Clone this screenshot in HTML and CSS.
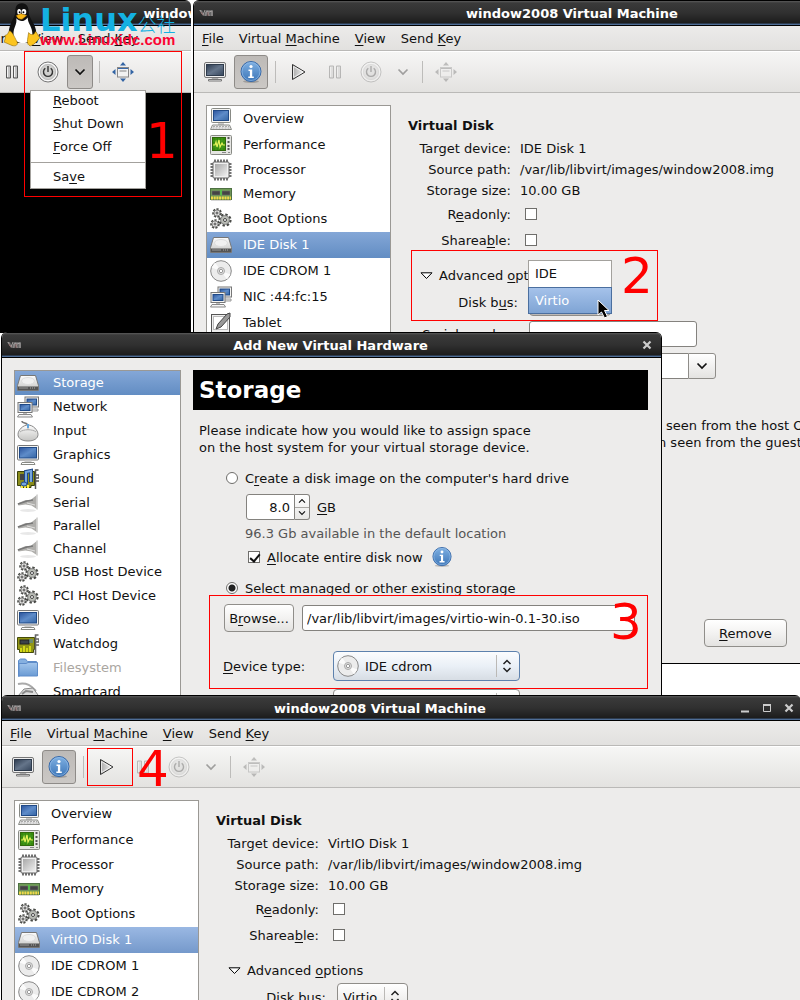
FILE: index.html
```html
<!DOCTYPE html>
<html lang="en">
<head>
<meta charset="utf-8">
<title>window2008 Virtual Machine</title>
<link rel="stylesheet" href="styles.css">
</head>
<body>
<svg class="sprite" aria-hidden="true">
  <defs>
    <linearGradient id="g-blue" x1="0" y1="0" x2="1" y2="1"><stop offset="0" stop-color="#2a539c"/><stop offset=".5" stop-color="#5e8cc9"/><stop offset="1" stop-color="#3465a4"/></linearGradient>
    <linearGradient id="g-slate" x1="0" y1="0" x2="1" y2="1"><stop offset="0" stop-color="#2c3a4e"/><stop offset=".5" stop-color="#65758a"/><stop offset="1" stop-color="#36465c"/></linearGradient>
    <linearGradient id="g-info" x1="0" y1="0" x2="0" y2="1"><stop offset="0" stop-color="#7fb0e2"/><stop offset="1" stop-color="#3d76b8"/></linearGradient>
    <linearGradient id="g-metal" x1="0" y1="0" x2="0" y2="1"><stop offset="0" stop-color="#fdfdfd"/><stop offset="1" stop-color="#c4c4c2"/></linearGradient>
    <linearGradient id="g-chip" x1="0" y1="0" x2="1" y2="1"><stop offset="0" stop-color="#a9a9a9"/><stop offset="1" stop-color="#eeeeee"/></linearGradient>
    <linearGradient id="g-play" x1="0" y1="0" x2="1" y2="0"><stop offset="0" stop-color="#aaaaaa"/><stop offset="1" stop-color="#f4f4f4"/></linearGradient>
    <linearGradient id="g-folder" x1="0" y1="0" x2="0" y2="1"><stop offset="0" stop-color="#a4c6ec"/><stop offset="1" stop-color="#6a9bd4"/></linearGradient>
  </defs>
  <symbol id="vm" viewBox="0 0 14 8"><path d="M0 1h3l2 4 2-4h7v6H10L8 5 7 7H4z" fill="#666" /><path d="M1 1l3 5 2-5M7 7V3l2-1 1 5M10 3l3-1v5" fill="none" stroke="#a5a0a0"/><path d="M2 3l2 3M9 3v4" stroke="#8b6565"/></symbol>
  <symbol id="screen" viewBox="0 0 22 20"><rect x=".5" y=".5" width="21" height="15" rx="1.5" fill="#eee" stroke="#777"/><rect x="2.5" y="2.5" width="17" height="11" fill="url(#g-slate)" stroke="#2e3b4c"/><path d="M8 16h6l1 2H7z" fill="#aaa"/><path d="M4.500 19v-1.500h13V19z" fill="#eee" stroke="#777"/></symbol>
  <symbol id="info" viewBox="0 0 22 22"><ellipse cx="11" cy="20.500" rx="8" ry="1.500" fill="#000" opacity=".2"/><circle cx="11" cy="10.500" r="10" fill="url(#g-info)" stroke="#3668a8"/><circle cx="11" cy="10.500" r="9" fill="none" stroke="#9cc3ec" opacity=".6"/><circle cx="11" cy="5.500" r="1.600" fill="#fff"/><path d="M8.500 8.500h3.700v7h1.600v1.500H8.300v-1.500h1.600v-5.500H8.500z" fill="#fff"/></symbol>
  <symbol id="play" viewBox="0 0 16 18"><path d="M1.500 1.500v15l12.500-7.500z" fill="url(#g-play)" stroke="#333" stroke-linejoin="round"/><path d="M2.500 3.500v11l9.500-5.500z" fill="none" stroke="#fff" opacity=".7"/></symbol>
  <symbol id="pause" viewBox="0 0 14 14"><path d="M1.500 1h4v12h-4zM8.500 1h4v12h-4z" fill="#c4c4c4" stroke="#555"/><path d="M2.500 2v10M9.500 2v10" stroke="#f3f3f3"/></symbol>
  <symbol id="power" viewBox="0 0 22 22"><circle cx="11" cy="11" r="10" fill="#ddd" stroke="#777"/><circle cx="11" cy="11" r="8.700" fill="none" stroke="#fff"/><circle cx="11" cy="11" r="7.600" fill="#d0d0ce" stroke="#aaa" stroke-width=".6"/><path d="M8.300 7.300a4.500 4.500 0 1 0 5.400 0M11 5v6" fill="none" stroke="#333" stroke-width="1.400"/></symbol>
  <symbol id="chev" viewBox="0 0 12 8"><path d="M1.500 1.500L6 6l4.500-4.500" fill="none" stroke="currentColor" stroke-width="1.700"/></symbol>
  <symbol id="resize" viewBox="0 0 22 20"><rect x="5.500" y="5.500" width="11" height="9.500" fill="#f2f2f2" stroke="#888"/><path d="M6 6.500h10" stroke="#3a69ab"/><path d="M7.500 9h7" stroke="#bbb" stroke-width="2"/><path d="M11 0l3 3.500H8zM11 20l3-3.500H8zM0 10l3.500-3v6zM22 10l-3.500-3v6z" fill="#3465a4"/></symbol>
  <symbol id="computer" viewBox="0 0 22 22"><rect x="1.500" y=".5" width="19" height="14" rx="1" fill="#f4f4f2" stroke="#888a85"/><rect x="3.500" y="2.500" width="15" height="10" fill="url(#g-blue)" stroke="#204a87"/><path d="M8 15h6v2H8z" fill="#ccc"/><path d="M2.500 17h17l2 4.500H.5z" fill="#eee" stroke="#888a85"/><path d="M3 18.500h16M2.500 20h17" stroke="#aaa" stroke-dasharray="2 1"/></symbol>
  <symbol id="monitor" viewBox="0 0 22 22"><rect x=".5" y="1.500" width="21" height="14.500" rx="1" fill="#f4f4f2" stroke="#777"/><rect x="2.500" y="3.500" width="17" height="10.500" fill="url(#g-blue)" stroke="#204a87"/><path d="M8 16.500h6l1 2H7z" fill="#ccc"/><path d="M4 20.500l1-2h12l1 2z" fill="#fff" stroke="#888a85"/></symbol>
  <symbol id="performance" viewBox="0 0 22 22"><rect x=".5" y="1.500" width="21" height="19" rx="1" fill="#e5e5e2" stroke="#888a85"/><rect x="2.500" y="3.500" width="13" height="13" fill="#358a0c" stroke="#31680c"/><path d="M3 7h12M3 10h12M3 13h12M6 4v12M9 4v12M12 4v12" stroke="#53a52b" stroke-width=".6"/><path d="M3 11h2l1-3 1 5 2-7 1 7 2-4 1 2h2" fill="none" stroke="#e7f35a" stroke-width="1.200"/><path d="M17.500 4h2M17.500 8h2M17.500 12h2M17.500 15h2" stroke="#555" stroke-width="2"/><path d="M12 18.500h4M18 18.500h2" stroke="#888"/></symbol>
  <symbol id="cpu" viewBox="0 0 22 22"><path d="M5 .5v21M8 .5v21M11 .5v21M14 .5v21M17 .5v21M.5 5h21M.5 8h21M.5 11h21M.5 14h21M.5 17h21" stroke="#444" stroke-width="1.500"/><rect x="3" y="3" width="16" height="16" rx="1" fill="#f0f0f0" stroke="#666"/><rect x="5" y="5" width="12" height="12" fill="url(#g-chip)"/></symbol>
  <symbol id="memory" viewBox="0 0 22 22"><rect x=".5" y="5.500" width="21" height="11" fill="#6d9b54" stroke="#4e7043"/><path d="M2 8h8v4H2zM12 8h8v4h-8z" fill="#444" stroke="#777" stroke-width=".5"/><path d="M11 7v5" stroke="#3de23d"/><path d="M1 15h20" stroke="#f0d84a" stroke-width="3" stroke-dasharray="2 .7"/><path d="M1 17.500h20" stroke="#bbb" opacity=".6"/></symbol>
  <symbol id="gears" viewBox="0 0 22 22"><g fill="#dcdcda" stroke="#4a4c48"><circle cx="7" cy="5" r="3.700" stroke-width="2.200" stroke-dasharray="2 1.300"/><circle cx="5" cy="16" r="3.700" stroke-width="2.200" stroke-dasharray="2 1.300"/><circle cx="15" cy="12" r="5.300" stroke-width="2.600" stroke-dasharray="2.300 1.800"/></g><g fill="#e6e6e4" stroke="#888"><circle cx="7" cy="5" r="3"/><circle cx="5" cy="16" r="3"/><circle cx="15" cy="12" r="4.300" fill="#babdb6"/></g><g fill="#fff" stroke="#444"><circle cx="7" cy="5" r="1"/><circle cx="5" cy="16" r="1"/><circle cx="15" cy="12" r="1.500"/></g></symbol>
  <symbol id="disk" viewBox="0 0 22 22"><path d="M3.500 3.500h15l3 10v5H.5v-5z" fill="url(#g-metal)" stroke="#777"/><ellipse cx="11" cy="9" rx="6.500" ry="3.500" fill="#f0f0f0" stroke="#ddd"/><path d="M1 14.500h20v3.500H1z" fill="#555"/><path d="M2 16h9" stroke="#999"/><path d="M13 16h6" stroke="#aaa" stroke-dasharray="1 1"/></symbol>
  <symbol id="disc" viewBox="0 0 22 22"><circle cx="11" cy="11" r="10.300" fill="#ececec" stroke="#888"/><path d="M11 11L5 2.500l-3.500 5zM11 11l6 8.500 3.500-5z" fill="#fff" opacity=".8"/><circle cx="11" cy="11" r="3.500" fill="#e2e2e2" stroke="#aaa"/><circle cx="11" cy="11" r="1.700" fill="#fff" stroke="#999"/></symbol>
  <symbol id="network" viewBox="0 0 22 22"><rect x="8" y="1" width="13.500" height="10" fill="#f4f4f2" stroke="#777"/><rect x="10" y="3" width="9.500" height="6" fill="url(#g-blue)" stroke="#204a87"/><path d="M14 13h7v2h-7z" fill="#eee" stroke="#999"/><rect x="1" y="6.500" width="14" height="10" fill="#f4f4f2" stroke="#777"/><rect x="3" y="8.500" width="10" height="6" fill="url(#g-blue)" stroke="#204a87"/><path d="M6 17h4v2H6z" fill="#bbb"/><path d="M.5 21l1.500-2.500h12l1.500 2.500z" fill="#f6f6f6" stroke="#888"/></symbol>
  <symbol id="tablet" viewBox="0 0 22 22"><rect x="1.500" y="2.500" width="18" height="18" fill="#eee" stroke="#555"/><rect x="3.500" y="4.500" width="14" height="13" fill="#fff" stroke="#bbb"/><path d="M20 1l-3 1-9 10-2 5 5-2L20 5z" fill="#999" stroke="#444"/></symbol>
  <symbol id="mouse" viewBox="0 0 22 22"><path d="M5 1c0 3 6 1 6 5" fill="none" stroke="#777" stroke-width="1.500"/><path d="M11 5c5 0 10 5 10 9.500 0 4-4 6.500-10 6.500S1 18.500 1 14.500C1 10 6 5 11 5z" fill="url(#g-metal)" stroke="#888"/><path d="M3 12c3-3 13-3 16 0M11 5v5" fill="none" stroke="#aaa"/><path d="M11 4v4" stroke="#60a5df" stroke-width="2"/></symbol>
  <symbol id="sound" viewBox="0 0 22 22"><path d="M.5 3.500h17v14H14v2H4v-2H.5z" fill="#8a8d1c" stroke="#39400a"/><path d="M3 6h6v6H3z" fill="#444"/><path d="M5 17v3M8 17v3M11 17v3" stroke="#ffef3d" stroke-width="2"/><path d="M9 16V4l5-1v11" fill="none" stroke="#204a87" stroke-width="4"/><path d="M9 16V4l5-1v11" fill="none" stroke="#76a6df" stroke-width="2"/><ellipse cx="7" cy="16" rx="3" ry="2" fill="#76a6df" stroke="#204a87"/><path d="M18.500 21V2h3M19 7h3v3h-3M19 13h3" fill="none" stroke="#555" stroke-width="1.500"/></symbol>
  <symbol id="cone" viewBox="0 0 22 22"><ellipse cx="11" cy="19.500" rx="8" ry="1.500" fill="#000" opacity=".09"/><path d="M.5 12.500l8-3.500h5l7-5.500v15l-6-4-6-1-7 1z" fill="#aeadaa"/><path d="M20 3.500v15" stroke="#d6d6d4" stroke-width="1.500"/><path d="M1 13l9-3 6-1" fill="none" stroke="#777" stroke-width="1.500"/><path d="M10 12l8 2" stroke="#dfdfde"/></symbol>
  <symbol id="card" viewBox="0 0 22 22"><path d="M.5 4.500h17v12h-1v3h-14v-3h-2z" fill="#929615" stroke="#454b09"/><path d="M4 15v4M7 13v6M10 15v4M13 13v6" stroke="#e7ee19" stroke-width="1.500"/><rect x="3" y="7" width="9" height="4" fill="#3b4149" stroke="#222"/><path d="M12 9h4M12 7l4 0" stroke="#4b83c4"/><path d="M18.500 22V2h3M19 6h3v3h-3M19 12h3" fill="none" stroke="#666" stroke-width="1.600"/></symbol>
  <symbol id="folder" viewBox="0 0 22 22"><path d="M1.500 19.500v-16l2-1.500h5l2 2.500h9v4z" fill="#86b0e0" stroke="#5e8cc9"/><path d="M2 6.500h7l2-1h9.500v13.500H2z" fill="url(#g-folder)" stroke="#5e8cc9"/></symbol>
  <symbol id="smart" viewBox="0 0 22 22"><path d="M1 3c10-2 14 3 18 7" fill="none" stroke="#aaa" stroke-width="2"/><path d="M1 15l6-7 9-1 5 7v6H1z" fill="#ddd" stroke="#888"/><path d="M5 13l4-3 7 1" fill="none" stroke="#888" stroke-width="2"/></symbol>
  <symbol id="updown" viewBox="0 0 10 14"><path d="M1.500 5L5 1.500 8.500 5M1.500 9L5 12.500 8.500 9" fill="none" stroke="#222" stroke-width="1.500"/></symbol>
  <symbol id="tri" viewBox="0 0 13 8"><path d="M1 .8h11L6.500 6.500z" fill="#fff" stroke="#000"/></symbol>
  <symbol id="wmin" viewBox="0 0 10 10"><path d="M1 8.500h8" stroke="#ccc" stroke-width="2"/></symbol>
  <symbol id="wmax" viewBox="0 0 10 10"><path d="M1.500 1.500h7v7h-7z" fill="none" stroke="#ccc"/><path d="M1 2h8" stroke="#ccc" stroke-width="2"/></symbol>
  <symbol id="wclose" viewBox="0 0 10 10"><path d="M1.500 1.500l7 7M8.500 1.500l-7 7" stroke="#ccc" stroke-width="2.200"/></symbol>
</svg>

<main class="desktop">

  <section class="window win-console">
    <header class="titlebar"><svg class="vm-mark"><use href="#vm"/></svg><h2>window2008 Virtual Machine</h2><div class="win-buttons"></div></header>
    <nav class="menubar"><a href="#"><u>F</u>ile</a><a href="#">Virtual <u>M</u>achine</a><a href="#"><u>V</u>iew</a><a href="#">Send <u>K</u>ey</a></nav>
    <div class="toolbar">
      <button class="tool" aria-label="Console"><svg width="22" height="20"><use href="#screen"/></svg></button>
      <button class="tool" aria-label="Details"><svg width="22" height="22"><use href="#info"/></svg></button>
      <span class="sep"></span>
      <button class="tool" aria-label="Run"><svg width="16" height="18"><use href="#play"/></svg></button>
      <button class="tool" aria-label="Pause"><svg width="14" height="14"><use href="#pause"/></svg></button>
      <button class="tool" aria-label="Shut down"><svg width="22" height="22"><use href="#power"/></svg></button>
      <button class="tool narrow pressed" aria-label="Power menu"><svg width="12" height="8"><use href="#chev"/></svg></button>
      <span class="sep"></span>
      <button class="tool" aria-label="Fullscreen"><svg width="22" height="20"><use href="#resize"/></svg></button>
    </div>
    <div class="console"></div>
  </section>

  <section class="window win-details">
    <header class="titlebar"><svg class="vm-mark"><use href="#vm"/></svg><h2>window2008 Virtual Machine</h2><div class="win-buttons"><button aria-label="Minimize"><svg><use href="#wmin"/></svg></button><button aria-label="Maximize"><svg><use href="#wmax"/></svg></button><button aria-label="Close"><svg><use href="#wclose"/></svg></button></div></header>
    <nav class="menubar"><a href="#"><u>F</u>ile</a><a href="#">Virtual <u>M</u>achine</a><a href="#"><u>V</u>iew</a><a href="#">Send <u>K</u>ey</a></nav>
    <div class="toolbar">
      <button class="tool" aria-label="Console"><svg width="22" height="20"><use href="#screen"/></svg></button>
      <button class="tool pressed" aria-label="Details"><svg width="22" height="22"><use href="#info"/></svg></button>
      <span class="sep"></span>
      <button class="tool" aria-label="Run"><svg width="16" height="18"><use href="#play"/></svg></button>
      <button class="tool" disabled aria-label="Pause"><svg width="14" height="14"><use href="#pause"/></svg></button>
      <button class="tool" disabled aria-label="Shut down"><svg width="22" height="22"><use href="#power"/></svg></button>
      <button class="tool narrow" disabled aria-label="Power menu"><svg width="12" height="8"><use href="#chev"/></svg></button>
      <span class="sep"></span>
      <button class="tool" disabled aria-label="Fullscreen"><svg width="22" height="20"><use href="#resize"/></svg></button>
    </div>
    <div class="body">
      <ul class="list hardware">
        <li><svg><use href="#computer"/></svg>Overview</li>
        <li><svg><use href="#performance"/></svg>Performance</li>
        <li class="short"><svg><use href="#cpu"/></svg>Processor</li>
        <li class="short"><svg><use href="#memory"/></svg>Memory</li>
        <li><svg><use href="#gears"/></svg>Boot Options</li>
        <li class="selected"><svg><use href="#disk"/></svg>IDE Disk 1</li>
        <li><svg><use href="#disc"/></svg>IDE CDROM 1</li>
        <li><svg><use href="#network"/></svg>NIC :44:fc:15</li>
        <li><svg><use href="#tablet"/></svg>Tablet</li>
      </ul>
      <div class="details">
        <h3>Virtual Disk</h3>
        <dl class="facts">
          <dt>Target device:</dt><dd>IDE Disk 1</dd>
          <dt>Source path:</dt><dd>/var/lib/libvirt/images/window2008.img</dd>
          <dt>Storage size:</dt><dd>10.00 GB</dd>
        </dl>
        <div class="check-row"><label for="ro1">R<u>e</u>adonly:</label><input type="checkbox" id="ro1"></div>
        <div class="check-row"><label for="sh1">Sharea<u>b</u>le:</label><input type="checkbox" id="sh1"></div>
        <div class="expander"><svg><use href="#tri"/></svg><span>Advanced <u>o</u>ptions</span></div>
        <div class="field-row">
          <label for="bus1">Disk b<u>u</u>s:</label>
          <div class="combo bus-open"><select id="bus1"><option>Virtio</option><option>IDE</option></select>
            <ul class="bus-popup"><li>IDE</li><li class="selected">Virtio</li></ul>
          </div>
        </div>
        <div class="field-row"><label for="serial">Serial <u>n</u>umber:</label><input type="text" id="serial" class="serial"></div>
        <div class="field-row"><label></label><div class="combo-entry"><input type="text" aria-label="Storage format"><button aria-label="Show formats"><svg width="12" height="8"><use href="#chev"/></svg></button></div></div>
        <p class="tip"><span>seen from the host OS,</span>n seen from the guest OS.</p>
        <button class="push remove"><u>R</u>emove</button>
      </div>
    </div>
  </section>

  <section class="window win-dialog">
    <header class="titlebar"><svg class="vm-mark"><use href="#vm"/></svg><h2>Add New Virtual Hardware</h2><div class="win-buttons single"><button aria-label="Close"><svg><use href="#wclose"/></svg></button></div></header>
    <div class="body">
      <ul class="list kinds">
        <li class="selected"><svg><use href="#disk"/></svg>Storage</li>
        <li><svg><use href="#network"/></svg>Network</li>
        <li><svg><use href="#mouse"/></svg>Input</li>
        <li><svg><use href="#monitor"/></svg>Graphics</li>
        <li><svg><use href="#sound"/></svg>Sound</li>
        <li class="short"><svg><use href="#cone"/></svg>Serial</li>
        <li class="short"><svg><use href="#cone"/></svg>Parallel</li>
        <li class="short"><svg><use href="#cone"/></svg>Channel</li>
        <li><svg><use href="#gears"/></svg>USB Host Device</li>
        <li><svg><use href="#gears"/></svg>PCI Host Device</li>
        <li><svg><use href="#monitor"/></svg>Video</li>
        <li><svg><use href="#card"/></svg>Watchdog</li>
        <li class="off"><svg><use href="#folder"/></svg>Filesystem</li>
        <li><svg><use href="#smart"/></svg>Smartcard</li>
      </ul>
      <form class="storage">
        <h1>Storage</h1>
        <p class="intro">Please indicate how you would like to assign space<br>on the host system for your virtual storage device.</p>
        <div class="option"><input type="radio" name="src" id="create"><label for="create">C<u>r</u>eate a disk image on the computer's hard drive</label></div>
        <div class="size-row">
          <div class="spin"><input type="text" id="size" value="8.0"><div class="steps"><button type="button" aria-label="Increase"><svg class="flip"><use href="#chev"/></svg></button><button type="button" aria-label="Decrease"><svg><use href="#chev"/></svg></button></div></div>
          <label for="size"><u>G</u>B</label>
        </div>
        <p class="avail">96.3 Gb available in the default location</p>
        <div class="option nested"><input type="checkbox" id="alloc" checked><label for="alloc"><u>A</u>llocate entire disk now</label><svg class="info-mark"><use href="#info"/></svg></div>
        <div class="option second"><input type="radio" name="src" id="managed" checked><label for="managed">Select <u>m</u>anaged or other existing storage</label></div>
        <div class="path-row"><button type="button" class="push">B<u>r</u>owse...</button><input type="text" aria-label="Storage path" value="/var/lib/libvirt/images/virtio-win-0.1-30.iso"></div>
        <div class="type-row"><label for="dtype"><u>D</u>evice type:</label>
          <div class="combo focus"><select id="dtype"><option>IDE cdrom</option></select><svg class="combo-icon"><use href="#disc"/></svg><svg class="arrows"><use href="#updown"/></svg></div></div>
        <div class="type-row"><label></label><div class="combo"><select aria-label="Cache mode"><option></option></select><svg class="arrows"><use href="#updown"/></svg></div></div>
      </form>
    </div>
  </section>

  <section class="window win-result">
    <header class="titlebar"><svg class="vm-mark"><use href="#vm"/></svg><h2>window2008 Virtual Machine</h2><div class="win-buttons"><button aria-label="Minimize"><svg><use href="#wmin"/></svg></button><button aria-label="Maximize"><svg><use href="#wmax"/></svg></button><button aria-label="Close"><svg><use href="#wclose"/></svg></button></div></header>
    <nav class="menubar"><a href="#"><u>F</u>ile</a><a href="#">Virtual <u>M</u>achine</a><a href="#"><u>V</u>iew</a><a href="#">Send <u>K</u>ey</a></nav>
    <div class="toolbar">
      <button class="tool" aria-label="Console"><svg width="22" height="20"><use href="#screen"/></svg></button>
      <button class="tool pressed" aria-label="Details"><svg width="22" height="22"><use href="#info"/></svg></button>
      <span class="sep"></span>
      <button class="tool" aria-label="Run"><svg width="16" height="18"><use href="#play"/></svg></button>
      <button class="tool" disabled aria-label="Pause"><svg width="14" height="14"><use href="#pause"/></svg></button>
      <button class="tool" disabled aria-label="Shut down"><svg width="22" height="22"><use href="#power"/></svg></button>
      <button class="tool narrow" disabled aria-label="Power menu"><svg width="12" height="8"><use href="#chev"/></svg></button>
      <span class="sep"></span>
      <button class="tool" disabled aria-label="Fullscreen"><svg width="22" height="20"><use href="#resize"/></svg></button>
    </div>
    <div class="body">
      <ul class="list hardware">
        <li><svg><use href="#computer"/></svg>Overview</li>
        <li><svg><use href="#performance"/></svg>Performance</li>
        <li class="short"><svg><use href="#cpu"/></svg>Processor</li>
        <li class="short"><svg><use href="#memory"/></svg>Memory</li>
        <li><svg><use href="#gears"/></svg>Boot Options</li>
        <li class="selected pale"><svg><use href="#disk"/></svg>VirtIO Disk 1</li>
        <li><svg><use href="#disc"/></svg>IDE CDROM 1</li>
        <li><svg><use href="#disc"/></svg>IDE CDROM 2</li>
      </ul>
      <div class="details">
        <h3>Virtual Disk</h3>
        <dl class="facts">
          <dt>Target device:</dt><dd>VirtIO Disk 1</dd>
          <dt>Source path:</dt><dd>/var/lib/libvirt/images/window2008.img</dd>
          <dt>Storage size:</dt><dd>10.00 GB</dd>
        </dl>
        <div class="check-row"><label for="ro2">R<u>e</u>adonly:</label><input type="checkbox" id="ro2"></div>
        <div class="check-row"><label for="sh2">Sharea<u>b</u>le:</label><input type="checkbox" id="sh2"></div>
        <div class="expander"><svg><use href="#tri"/></svg><span>Advanced <u>o</u>ptions</span></div>
        <div class="field-row"><label for="bus2">Disk b<u>u</u>s:</label><div class="combo bus"><select id="bus2"><option>Virtio</option></select><svg class="arrows"><use href="#updown"/></svg></div></div>
      </div>
    </div>
  </section>

  <ul class="power-menu"><li><u>R</u>eboot</li><li><u>S</u>hut Down</li><li><u>F</u>orce Off</li><li class="divided">Sa<u>v</u>e</li></ul>

  <div class="logo">
    <svg class="tux" viewBox="0 0 38 46"><path d="M19 0c-6 0-7 4-7 9 0 6-7 12-7 23l7 10h15l7-11c0-9-8-15-8-22 0-5-2-9-7-9z" fill="#111"/><path d="M13 16c4 4 8 4 12-1 0 7 5 9 5 18 0 6-4 9-10 9S9 39 10 33c0-8 4-10 3-17z" fill="#fff"/><ellipse cx="16" cy="9" rx="2" ry="3" fill="#fff"/><ellipse cx="21" cy="9" rx="2.500" ry="3" fill="#fff"/><circle cx="16.500" cy="9.500" r="1"/><circle cx="20.500" cy="9.500" r="1"/><path d="M13 13l5-2 6 2-5 4c-3 0-5-1-6-4z" fill="#fab916" stroke="#a76c00" stroke-width=".5"/><path d="M6 29c3 1 6 9 8 12 1 4-3 5-7 3l-7-3c1-3 2-4 1-7 3 0 3-3 5-5zM26 31c2 3 6 3 7-1 2 0 2 4 5 6-2 3-6 8-10 9-5-1-3-7-2-14z" fill="#fbc41f" stroke="#8c6500" stroke-width=".6"/></svg>
    <div><div class="logo-name"><b>Linux</b><span>公社</span></div><div class="logo-url">www.Linuxidc.com</div></div>
  </div>

  <svg class="pointer" viewBox="0 0 13 20"><path d="M1 1v15l3.500-3 3 6 3-1.500-3-6H12z" fill="#000" stroke="#fff"/></svg>

  <div class="mark mark-1"></div><span class="step step-1">1</span>
  <div class="mark mark-2"></div><span class="step step-2">2</span>
  <div class="mark mark-3"></div><span class="step step-3">3</span>
  <div class="mark mark-4"></div><span class="step step-4">4</span>
</main>
</body>
</html>
```
FILE: styles.css
```css
* { box-sizing: border-box; }
body { margin: 0; background: #fff; color: #111; font: 13px/17px "DejaVu Sans", sans-serif; }
input, select, button { font: inherit; color: inherit; margin: 0; }
button { padding: 0; }
svg { display: block; flex: none; }
ul, dl, dd, p, h1, h2, h3 { margin: 0; padding: 0; list-style: none; }
a { color: inherit; text-decoration: none; }
u { text-decoration: underline; text-decoration-skip-ink: none; text-underline-offset: 2px; text-decoration-thickness: 1px; }
.sprite { position: absolute; width: 0; height: 0; }

.desktop { position: relative; height: 100vh; overflow: hidden; white-space: nowrap; }
.window { position: absolute; display: flex; flex-direction: column; width: 100%; background: #edeceb; border: 0 solid #000; border-left-width: 1px; border-radius: 6px 6px 0 0; overflow: hidden; }
.win-console { left: -130px; top: 0; height: 333px; width: 321px; }
.win-console .titlebar, .win-console .menubar, .win-console .toolbar { width: 100vw; }
.win-details { left: 193px; top: 0; height: 664px; border-bottom-width: 1px; }
.win-dialog { left: 1px; top: 332px; width: 661px; height: 420px; border-right-width: 1px; }
.win-result { left: 1px; top: 695px; height: 420px; }

.titlebar { flex: none; display: flex; align-items: center; height: 26px; color: #fff; border-top: 1px solid #000; border-bottom: 1px solid #000; background: linear-gradient(#5a5a5a 0, #3a3a3a 2px, #303030 12px, #1c1c1c 22px, #3d5a80 23px, #6080ab 24px); }
.titlebar h2 { flex: 1; text-align: center; font-size: 13px; font-weight: bold; }
.vm-mark { width: 14px; height: 8px; margin: 0 11px 0 5px; }
.win-buttons { display: flex; justify-content: flex-end; gap: 12px; width: 73px; padding-right: 7px; }
.win-buttons.single { width: 32px; padding-right: 9px; }
.win-buttons button { border: 0; background: none; }
.win-buttons svg { width: 10px; height: 10px; }
.menubar { flex: none; display: flex; align-items: center; gap: 15px; height: 25px; padding: 0 8px; border-bottom: 1px solid #bab9b7; background: linear-gradient(#ecebea, #e2e1df); }
.toolbar { flex: none; display: flex; align-items: center; gap: 2px; height: 42px; padding: 0 4px; border-top: 1px solid #fff; border-bottom: 1px solid #bab9b7; background: linear-gradient(#f6f6f5, #e3e2e0); }
.tool { display: flex; align-items: center; justify-content: center; width: 34px; height: 34px; border: 1px solid transparent; border-radius: 3px; background: none; }
.narrow { width: 26px; }
.pressed { border-color: #8e8b88; background: linear-gradient(#bdbab7, #cbc8c5); }
.tool:disabled svg { opacity: .35; filter: grayscale(1); }
.sep { width: 1px; height: 22px; margin: 0 4px 0 5px; background: #bdbcba; }
.narrow + .sep { margin-left: 4px; }
.console { flex: 1; background: #000; }

.body { flex: 1; display: flex; align-items: flex-start; padding: 12px; }
.win-dialog .body { padding-right: 13px; }
.list { flex: none; border: 1px solid #9a9894; background: #fff; }
.list li { display: flex; align-items: center; height: 26px; padding: 0 3px 1px; gap: 11px; }
.list svg { width: 22px; height: 22px; }
.hardware { width: 185px; min-height: 320px; }
.hardware li.short { height: 24px; }
.list .selected { color: #fff; background: linear-gradient(#84a7d7, #628dc3); }
.list .pale { background: linear-gradient(#9ab8e3, #7599cb); }
.kinds { width: 167px; }
.kinds li { height: 24px; padding: 0 2px 1px; gap: 14px; }
.kinds li.short { height: 23px; }
.kinds .off { color: #aaa6a1; }

.details { flex: 1; padding: 11px 0 0 17px; }
.details h3 { font-size: 13px; line-height: 20px; margin-bottom: 2px; }
.facts { display: grid; grid-template-columns: 103px auto; column-gap: 9px; line-height: 21px; }
.facts dt { text-align: right; }
.check-row { display: flex; align-items: center; gap: 14px; height: 26px; }
.check-row label { width: 103px; text-align: right; }
input[type="checkbox"], input[type="radio"] { appearance: none; flex: none; width: 12px; height: 12px; border: 1px solid #6f6e6b; background: #fff; }
input[type="radio"] { border-radius: 50%; }
input[type="radio"]:checked { background: radial-gradient(#222 0 3px, #fff 4px); }
input[type="checkbox"]:checked::after { content: ""; display: block; width: 4px; height: 8px; margin: 0 0 0 3px; border: solid #111; border-width: 0 2px 2px 0; transform: rotate(40deg); }
.expander { display: flex; align-items: center; gap: 6px; height: 21px; margin: 12px 0 0 12px; }
.expander svg { width: 13px; height: 8px; }
.field-row { display: flex; align-items: center; gap: 11px; height: 32px; }
.field-row label { width: 110px; text-align: right; }
input[type="text"] { height: 26px; padding: 0 4px; border: 1px solid #84827e; border-radius: 3px; background: #fff; }
.serial { width: 168px; }
.combo-entry { display: flex; width: 187px; }
.combo-entry input { flex: 1; min-width: 0; border-right: 0; border-radius: 3px 0 0 3px; }
.combo-entry button { display: flex; align-items: center; justify-content: center; width: 28px; border: 1px solid #8f8d89; border-radius: 0 3px 3px 0; background: linear-gradient(#fff, #e4e3e1); }
.tip { padding: 35px 0 0 250px; }
.tip span { display: block; padding-left: 8px; }
.push { height: 28px; border: 1px solid #908e8a; border-radius: 4px; background: linear-gradient(#fff, #f3f2f1 50%, #e4e3e1); }
.remove { display: block; width: 83px; margin: 168px 0 0 296px; }

.combo { position: relative; }
.combo select { display: block; appearance: none; width: 100%; height: 28px; padding: 0 5px; border: 1px solid #8f8d89; border-radius: 4px; background: linear-gradient(#fff, #f3f2f1 50%, #e4e3e1); }
.arrows { position: absolute; right: 8px; top: 50%; width: 10px; height: 14px; margin-top: -7px; pointer-events: none; }
.combo::after { content: ""; position: absolute; right: 23px; top: 4px; bottom: 4px; width: 1px; background: #bbb9b6; }
.bus { width: 71px; }
.bus-open { width: 82px; }
.bus-open::after { display: none; }
.bus-open select { background: #bdbab7; }
.bus-popup { position: absolute; left: -1px; top: -28px; width: 84px; border: 1px solid #a3a19d; background: #fff; }
.bus-popup li { height: 26px; padding: 0 6px; line-height: 25px; }
.bus-popup .selected { margin: 0 -1px -1px; height: 27px; color: #fff; border: 1px solid #4b6f9f; background: linear-gradient(#a5c2ea, #7fa4d4); }

.storage { flex: 1; margin-left: 12px; }
.storage h1 { height: 40px; padding: 0 6px; background: #000; color: #fff; font-size: 23px; line-height: 40px; }
.intro { padding: 12px 0 11px 6px; }
.option { display: flex; align-items: center; gap: 7px; height: 22px; padding-left: 33px; }
.size-row { display: flex; align-items: center; gap: 7px; padding: 5px 0 1px 53px; }
.spin { display: flex; width: 64px; }
.spin input { width: 49px; border-radius: 3px 0 0 3px; text-align: right; }
.steps { display: flex; flex-direction: column; width: 15px; border: 1px solid #84827e; border-left: 0; border-radius: 0 3px 3px 0; background: linear-gradient(#fff, #e8e7e5); }
.steps button { flex: 1; display: flex; align-items: center; justify-content: center; border: 0; background: none; }
.steps button + button { border-top: 1px solid #aaa8a4; }
.steps svg { width: 8px; height: 6px; }
.flip { transform: rotate(180deg); }
.avail { padding: 4px 0 4px 52px; color: #555; }
.nested { padding-left: 55px; }
.info-mark { width: 20px; height: 20px; margin-left: 2px; }
.second { margin-top: 9px; }
.path-row { display: flex; align-items: center; gap: 8px; padding: 5px 13px 0 31px; }
.path-row .push { width: 70px; }
.path-row input { flex: 1; }
.type-row { display: flex; align-items: center; height: 38px; padding-left: 30px; }
.path-row + .type-row { margin-top: 15px; }
.type-row label { width: 110px; }
.type-row .combo { width: 187px; }
.type-row select { height: 30px; }
.focus select { padding-left: 31px; border-color: #5d81ad; background: linear-gradient(#fbfcfe, #eaf0f7 50%, #d7dde4); }
.combo-icon { position: absolute; left: 4px; top: 4px; width: 22px; height: 22px; pointer-events: none; }

.power-menu { position: absolute; left: 30px; top: 90px; width: 116px; border: 1px solid #a3a19d; background: #fff; }
.power-menu li { height: 23px; padding-left: 22px; line-height: 20px; }
.power-menu .divided { height: 26px; margin-top: 2px; border-top: 1px solid #a3a19d; line-height: 28px; }

.logo { position: absolute; left: 4px; top: 2px; display: flex; }
.tux { width: 36px; height: 46px; }
.logo-name { display: flex; align-items: flex-end; height: 31px; color: #14b1e2; }
.logo-name b { font-size: 32px; line-height: 26px; }
.logo-name span { font: 300 19px/18px "Noto Sans CJK SC", sans-serif; }
.logo-url { color: #fb0432; font: bold 15px/14px "Liberation Sans", sans-serif; }
.pointer { position: absolute; left: 597px; top: 299px; width: 13px; height: 20px; }

.mark { position: absolute; border: 1px solid #f00; pointer-events: none; }
.mark-1 { left: 24px; top: 51px; width: 158px; height: 146px; }
.mark-2 { left: 411px; top: 250px; width: 247px; height: 71px; }
.mark-3 { left: 209px; top: 595px; width: 439px; height: 94px; }
.mark-4 { left: 87px; top: 748px; width: 46px; height: 38px; }
.step { position: absolute; color: #f00; font-size: 50px; line-height: 50px; }
.step-1 { left: 146px; top: 116px; }
.step-2 { left: 621px; top: 251px; }
.step-3 { left: 610px; top: 597px; }
.step-4 { left: 137px; top: 744px; }
```
